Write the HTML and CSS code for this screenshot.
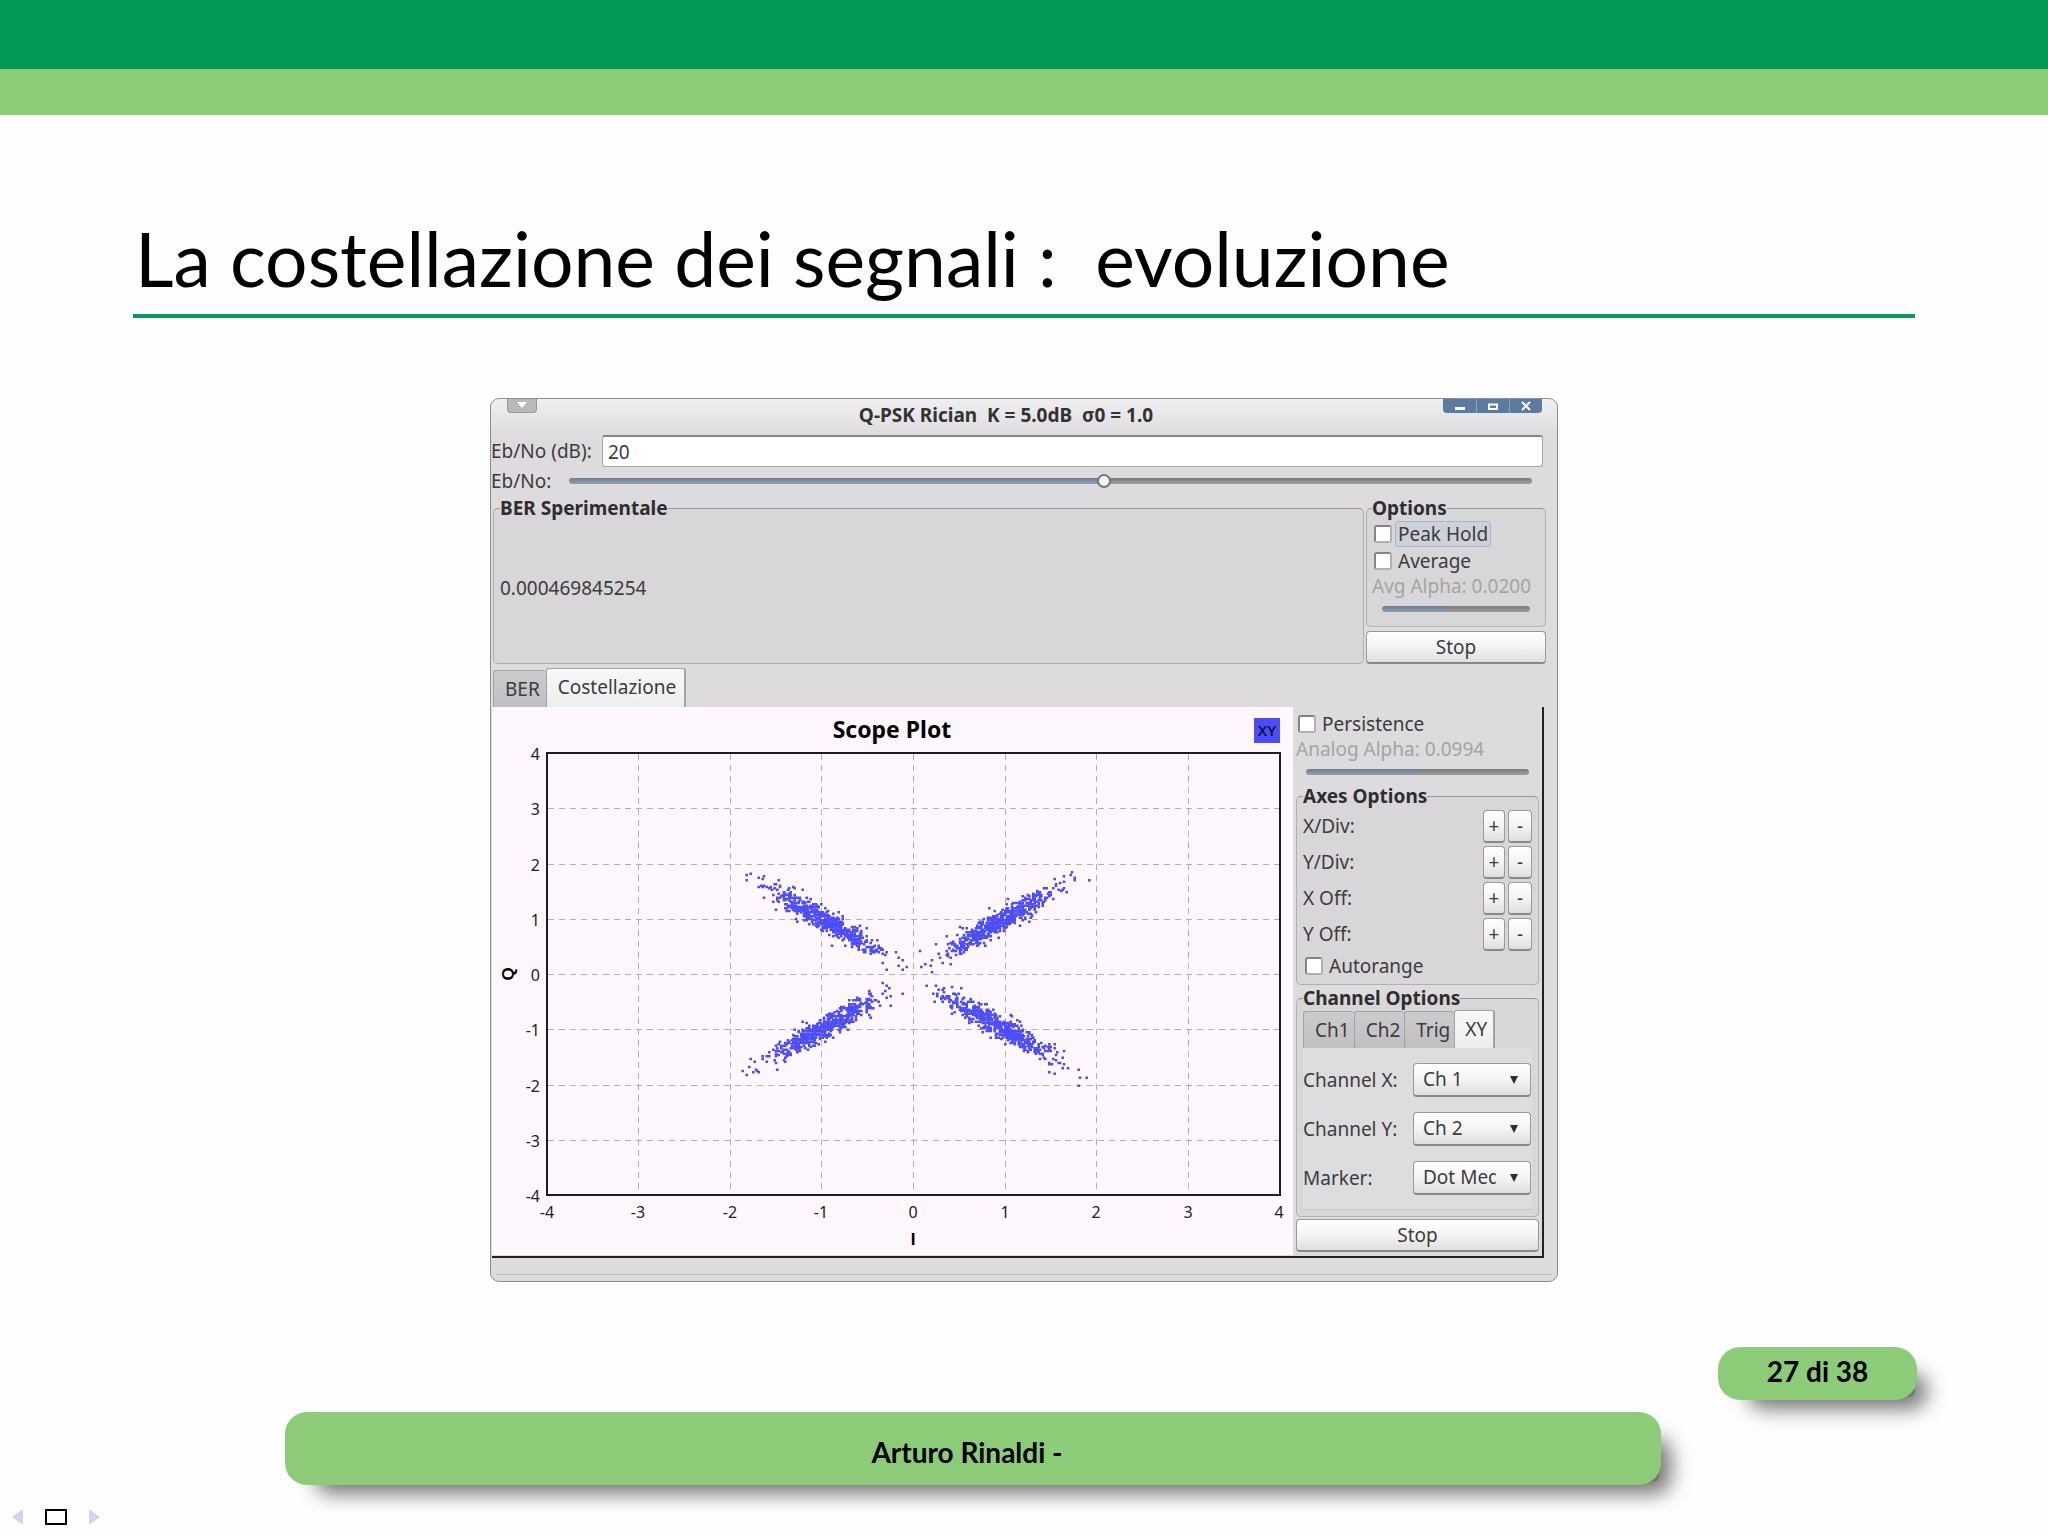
FILE: index.html
```html
<!DOCTYPE html>
<html lang="it">
<head>
<meta charset="utf-8">
<title>La costellazione dei segnali : evoluzione</title>
<link rel="stylesheet" href="styles.css">
</head>
<body>
<div class="slide">
  <header class="bands"><div class="band-dark"></div><div class="band-light"></div></header>
  <h1 class="title">La costellazione dei segnali :&nbsp; evoluzione</h1>

  <main class="window">
    <div class="titlebar">
      <button class="menu-button" type="button" aria-label="Menu"><svg width="10" height="7" viewBox="0 0 10 7"><path d="M0 0h10L5 6z" fill="#fff"/></svg></button>
      <h2 class="window-title">Q-PSK Rician&nbsp; K = 5.0dB&nbsp; σ0 = 1.0</h2>
      <div class="window-controls">
        <button type="button" aria-label="Minimize"><svg width="12" height="12" viewBox="0 0 12 12"><path d="M1 7h10v3H1z" fill="#fff"/></svg></button>
        <button type="button" aria-label="Maximize"><svg width="12" height="12" viewBox="0 0 12 12"><path d="M2 4.500h8v4.500H2z" fill="none" stroke="#fff" stroke-width="2"/></svg></button>
        <button type="button" aria-label="Close"><svg width="12" height="12" viewBox="0 0 12 12"><path d="M2 2l8 8M10 2l-8 8" stroke="#fff" stroke-width="2"/></svg></button>
      </div>
    </div>

    <div class="entry-row">
      <label for="ebno-db">Eb/No (dB):</label>
      <input id="ebno-db" class="entry" type="text" value="20">
    </div>
    <div class="slider-row">
      <label for="ebno">Eb/No:</label>
      <input id="ebno" class="slider" type="range" min="0" max="1000" value="556" style="--fill: 55.6%">
    </div>

    <div class="top-row">
      <fieldset class="group ber-group">
        <legend>BER Sperimentale</legend>
        <output class="ber-value">0.000469845254</output>
      </fieldset>
      <div class="side">
        <fieldset class="group options-group">
          <legend>Options</legend>
          <label class="check"><input type="checkbox"><span class="focused">Peak Hold</span></label>
          <label class="check"><input type="checkbox"><span>Average</span></label>
          <label class="muted" for="avg">Avg Alpha: 0.0200</label>
          <input id="avg" class="slider no-thumb" type="range" disabled value="44" style="--fill: 44%">
        </fieldset>
        <button class="button" type="button">Stop</button>
      </div>
    </div>

    <div class="tabs main-tabs" role="tablist">
      <button class="tab" type="button" role="tab">BER</button>
      <button class="tab active" type="button" role="tab" aria-selected="true">Costellazione</button>
    </div>

    <div class="page">
      <svg class="plot" viewBox="0 0 801 548" role="img" aria-label="Scope Plot">
        <g id="grid" class="grid"></g>
        <g id="points" class="points"></g>
        <path class="frame" d="M55 46H788V488H55z"/>
        <text class="plot-title" x="400" y="31">Scope Plot</text>
        <rect class="key" x="762" y="11" width="26" height="25"/>
        <text class="key-text" x="775" y="29">XY</text>
        <text class="axis" x="421" y="538">I</text>
        <text class="axis" transform="translate(22 267) rotate(-90)">Q</text>
        <g id="ticks" class="ticks"></g>
      </svg>

      <div class="panel">
        <label class="check"><input type="checkbox"><span>Persistence</span></label>
        <label class="muted" for="analog">Analog Alpha: 0.0994</label>
        <input id="analog" class="slider no-thumb" type="range" disabled value="50" style="--fill: 50%">

        <fieldset class="group axes-group">
          <legend>Axes Options</legend>
          <div class="step-row"><span>X/Div:</span><button class="button" type="button">+</button><button class="button" type="button">-</button></div>
          <div class="step-row"><span>Y/Div:</span><button class="button" type="button">+</button><button class="button" type="button">-</button></div>
          <div class="step-row"><span>X Off:</span><button class="button" type="button">+</button><button class="button" type="button">-</button></div>
          <div class="step-row"><span>Y Off:</span><button class="button" type="button">+</button><button class="button" type="button">-</button></div>
          <label class="check"><input type="checkbox"><span>Autorange</span></label>
        </fieldset>

        <fieldset class="group channel-group">
          <legend>Channel Options</legend>
          <div class="tabs" role="tablist">
            <button class="tab" type="button" role="tab">Ch1</button>
            <button class="tab" type="button" role="tab">Ch2</button>
            <button class="tab" type="button" role="tab">Trig</button>
            <button class="tab active" type="button" role="tab" aria-selected="true">XY</button>
          </div>
          <div class="channel-pane">
            <label for="chx">Channel X:</label>
            <div class="choice"><select id="chx"><option>Ch 1</option></select></div>
            <label for="chy">Channel Y:</label>
            <div class="choice"><select id="chy"><option>Ch 2</option></select></div>
            <label for="marker">Marker:</label>
            <div class="choice"><select id="marker"><option>Dot Medium</option></select></div>
          </div>
        </fieldset>
        <button class="button" type="button">Stop</button>
      </div>
    </div>
    <div class="status"></div>
  </main>

  <footer class="footer">
    <div class="pill page-number">27&nbsp;di&nbsp;38</div>
    <div class="pill author">Arturo Rinaldi -</div>
    <nav class="nav">
      <a href="#prev" aria-label="Precedente"><svg width="11" height="16" viewBox="0 0 11 16"><path d="M11 0v16L0 8z" fill="#d6d3ee"/></svg></a>
      <a href="#slide" aria-label="Diapositiva"><svg width="22" height="16" viewBox="0 0 22 16"><path d="M1 1h20v14H1z" fill="none" stroke="#000" stroke-width="2"/></svg></a>
      <a href="#next" aria-label="Successiva"><svg width="11" height="16" viewBox="0 0 11 16"><path d="M0 0v16l11-8z" fill="#d6d3ee"/></svg></a>
    </nav>
  </footer>
</div>
<script src="plot.js"></script>
</body>
</html>
```

FILE: styles.css
```css
* { box-sizing: border-box; }

body {
  margin: 0;
  background: #fefefe;
  color: #000;
}

button, input, select { font: inherit; color: inherit; margin: 0; }

.slide {
  display: flex;
  flex-direction: column;
  min-height: 100vh;
  isolation: isolate;
}

.band-dark { height: 69px; background: #009a57; }
.band-light { height: 46px; background: #8ccc78; }

.title {
  margin: 95px 133px 80px;
  padding: 0 0 8px 2px;
  border-bottom: 4px solid #079a5b;
  font: 400 75px/96px Lato, sans-serif;
}

/* Application window */
.window {
  width: 100%;
  max-width: 1068px;
  margin: 0 auto;
  border: 1px solid #8f8e92;
  border-radius: 9px;
  background: linear-gradient(#f0eff0, #dddbde 36px);
  color: #3c3c3c;
  font: 400 19px/24px "Noto Sans", sans-serif;
}

.titlebar {
  display: flex;
  align-items: flex-start;
  height: 36px;
  padding: 0 15px 0 16px;
}

.menu-button {
  display: flex;
  align-items: center;
  justify-content: center;
  width: 30px;
  height: 14px;
  padding: 0;
  border: 1px solid #98979a;
  border-top: 0;
  border-radius: 0 0 4px 4px;
  background: #b9b8bb;
}

.window-title {
  flex: 1;
  margin: 4px 0 0;
  padding-left: 32px;
  color: #333;
  font: 700 19px/24px "Noto Sans", sans-serif;
  text-align: center;
}

.window-controls {
  display: flex;
  height: 14px;
  border-radius: 0 0 4px 4px;
  background: #5b7ba3;
  overflow: hidden;
}

.window-controls button {
  display: flex;
  align-items: center;
  justify-content: center;
  width: 33px;
  padding: 0;
  border: 0;
  background: none;
}

.window-controls button + button { border-left: 1px solid #8ba3c0; }

.entry-row, .slider-row { display: flex; align-items: center; }
.entry-row { margin-bottom: 2px; padding-right: 14px; }
.entry-row label { width: 111px; }
.slider-row { margin-bottom: 3px; padding-right: 25px; }
.slider-row label { width: 78px; }

.entry {
  flex: 1;
  height: 32px;
  padding: 0 5px;
  border: 1px solid #a6a5a8;
  border-top: 2px solid #858488;
  border-radius: 3px;
  background: #fff;
}

.slider {
  appearance: none;
  display: block;
  flex: 1;
  height: 16px;
  background: none;
}

.slider::-webkit-slider-runnable-track {
  height: 6px;
  border-radius: 3px;
  background:
    linear-gradient(#0002, #fff2),
    linear-gradient(90deg, #8190a5 var(--fill), #8f8f91 var(--fill));
}

.slider::-webkit-slider-thumb {
  appearance: none;
  width: 14px;
  height: 14px;
  margin-top: -4px;
  border: 2px solid #77777a;
  border-radius: 7px;
  background: #f4f4f4;
}

.no-thumb::-webkit-slider-thumb { visibility: hidden; }

.top-row { display: flex; gap: 2px; padding: 0 11px 0 2px; }
.side { display: flex; flex-direction: column; width: 180px; }

.group {
  min-width: 0;
  margin: 0;
  padding: 0 6px;
  border: 1px solid #b0afb2;
  border-top-color: #98979a;
  border-radius: 5px;
  background: #d8d6d9;
}

.group legend {
  padding: 0;
  color: #2e2e2e;
  font: 700 19px/24px "Noto Sans", sans-serif;
}

.ber-group { flex: 1; }
.ber-value { display: block; margin-top: 56px; }

.options-group { padding: 0 5px 9px; }
.options-group .slider { width: 148px; margin: 3px 0 0 10px; }

.check {
  display: flex;
  align-items: center;
  gap: 3px;
  height: 27px;
  padding-left: 2px;
}

.check input {
  appearance: none;
  width: 18px;
  height: 18px;
  border: 2px solid #858488;
  border-right-color: #b0afb2;
  border-bottom-color: #b0afb2;
  border-radius: 3px;
  background: #fff;
}

.check span { padding: 0 2px; border: 1px solid transparent; border-radius: 3px; }
.check .focused { border-color: #aab4cf; background: #cfd1da; }

.muted { display: block; color: #a5a4a6; white-space: nowrap; }

.button {
  height: 33px;
  padding: 0;
  border: 1px solid #9a999c;
  border-bottom: 2px solid #88878a;
  border-radius: 4px;
  background: linear-gradient(#fff, #f4f4f4 50%, #dedee0);
}

.side > .button { margin-top: 4px; }

/* Tabs */
.tabs { display: flex; align-items: flex-end; }
.main-tabs { margin: 4px 2px 0; }

.tab {
  height: 37px;
  padding: 0 6px 0 11px;
  border: 1px solid #a3a2a5;
  border-bottom: 0;
  border-right: 0;
  border-radius: 3px 3px 0 0;
  background: linear-gradient(#cccbcd, #bfbec1);
}

.tab.active {
  height: 39px;
  padding: 0 8px 2px 11px;
  border-right: 2px solid #a3a2a5;
  background: linear-gradient(#f8f8f8, #eceeed);
}

.page {
  display: grid;
  grid-template-columns: 1fr 249px;
  margin-right: 13px;
  margin-left: 1px;
  border-right: 2px solid #222;
  border-bottom: 2px solid #222;
}

/* Scope plot */
.plot {
  display: block;
  width: 100%;
  height: auto;
  background: #fef8fe;
  font-family: "Noto Sans", sans-serif;
  text-anchor: middle;
}

.grid { stroke: #b9abb6; stroke-dasharray: 6 5; stroke-width: 1; shape-rendering: crispEdges; }
.points { fill: #4c4cfb; }
.frame { fill: none; stroke: #221c22; stroke-width: 2; }
.plot-title { font-size: 23px; font-weight: 700; }
.key { fill: #4c4cfb; }
.key-text { font-size: 15px; font-weight: 600; fill: #12124a; }
.axis { font-family: "Liberation Sans", sans-serif; font-size: 17px; font-weight: 700; }
.ticks { font-size: 16px; fill: #222; }
.ticks .left { text-anchor: end; }

/* Scope controls */
.panel { display: flex; flex-direction: column; padding: 4px 3px 4px 3px; }
.panel > .check { height: 25px; }
.panel > .muted { margin-top: 1px; }
.panel > .slider { flex: none; margin: 3px 10px 4px; }
.panel > .button { height: 33px; }

.axes-group legend { margin-bottom: 2px; }
.axes-group .check { height: 24px; margin-bottom: 6px; }
.step-row { display: flex; gap: 3px; margin-bottom: 3px; }
.step-row span { flex: 1; line-height: 32px; }
.step-row .button { width: 22px; font-size: 19px; line-height: 24px; }
.step-row .button:last-child { width: 24px; }

.channel-group { margin: 1px 0 2px; padding-bottom: 6px; }
.channel-group .tabs { height: 38px; }
.channel-group .tab { padding: 0 4px 0 11px; }
.channel-group .tab.active { height: 38px; padding: 0 6px 2px 10px; }

.channel-pane {
  display: grid;
  grid-template-columns: 1fr 118px;
  align-items: center;
  row-gap: 15px;
  padding: 15px 1px 14px 0;
  border-bottom: 1px solid #c4c3c6;
  background: #dddcde;
  white-space: nowrap;
}

.choice { position: relative; }

.choice::after {
  content: "";
  position: absolute;
  top: 13px;
  right: 13px;
  border: 4px solid transparent;
  border-top: 8px solid #2e2e2e;
  border-bottom: 0;
  pointer-events: none;
}

.choice select {
  appearance: none;
  display: block;
  width: 100%;
  height: 34px;
  padding: 0 34px 2px 9px;
  border: 1px solid #9a999c;
  border-bottom: 2px solid #88878a;
  border-radius: 4px;
  background: linear-gradient(#fff, #f4f4f4 50%, #dedee0);
  text-overflow: clip;
}

.status { height: 17px; margin: 0 5px 6px; border-bottom: 1px solid #c0bfc2; }

/* Footer */
.footer { display: flex; flex-direction: column; margin-top: 65px; }

.pill {
  position: relative;
  border-radius: 22px;
  background: #8ccc78;
  font: 700 28px/36px Lato, sans-serif;
  text-align: center;
}

.pill::before {
  content: "";
  position: absolute;
  z-index: -1;
  inset: 38px 2px 3px 42px;
  border-radius: 6px;
  background: #767676;
  box-shadow: 0 0 20px 12px #767676;
}

.page-number { align-self: flex-end; width: 199px; margin-right: 131px; padding: 6px 0 11px; }
.author { margin: 12px 387px 0 285px; padding: 22px 12px 15px 0; }
.nav { display: flex; gap: 22px; padding: 24px 12px 12px; }
.nav a, .nav svg { display: block; }
```

FILE: plot.js
```js
const SVG = "http://www.w3.org/2000/svg";
const X0 = 421, Y0 = 267, SX = 91.6, SY = 55.25;

function add(parent, name, attrs, text) {
  const el = document.createElementNS(SVG, name);
  for (const key in attrs) el.setAttribute(key, attrs[key]);
  if (text !== undefined) el.textContent = text;
  document.getElementById(parent).appendChild(el);
}

for (let v = -4; v <= 4; v++) {
  const x = Math.round(X0 + v * SX);
  const y = Math.round(Y0 - v * SY);
  if (Math.abs(v) < 4) {
    add("grid", "path", { d: `M${x} 47V487M56 ${y}H787` });
  }
  add("ticks", "text", { x, y: 511 }, v);
  add("ticks", "text", { x: 48, y: y + 7, class: "left" }, v);
}

// Seeded generator, so that the noise is the same on each load.
let seed = 20;
function random() {
  seed = (seed * 1664525 + 1013904223) % 4294967296;
  return (seed + 1) / 4294967297;
}
function gauss() {
  return Math.sqrt(-2 * Math.log(random())) * Math.cos(2 * Math.PI * random());
}

const cell = 4 / 3;
let d = "";
function dot(x, y) {
  const px = Math.round(x / cell) * cell;
  const py = Math.round(y / cell) * cell;
  d += `M${(px - 1.3).toFixed(1)} ${(py - 1.3).toFixed(1)}h2.6v2.6h-2.6z`;
}

for (const [si, sq] of [[1, 1], [-1, 1], [-1, -1], [1, -1]]) {
  for (let n = 0; n < 560; n++) {
    let r = 0.95 + 0.29 * gauss();
    while (r < 0.36 || r > 1.6) r = 0.95 + 0.29 * gauss();
    dot(X0 + si * SX * (r + 0.075 * gauss()), Y0 - sq * SY * (r + 0.075 * gauss()));
  }
}

// Sparse samples at the centre and at the tips, in plot pixels.
const sparse = [
  [255,168],[258,167],[255,173],[267,171],[270,172],[272,169],[266,180],[269,178],[272,178],[277,181],
  [394,245],[391,256],[395,262],[404,245],[406,251],[410,253],[406,258],[410,263],[415,260],[384,243],[389,242],
  [251,364],[255,368],[258,352],[257,360],[262,355],[261,365],[265,364],[267,365],[270,349],[264,363],
  [391,276],[394,279],[397,281],[398,289],[410,287],[393,284],
  [428,244],[429,260],[433,257],[438,259],[440,253],[440,265],[446,246],[448,251],[450,256],[459,257],
  [434,279],[444,279],[441,286],[445,289],[446,283],[443,294],[451,283],[451,295],[460,280],[469,281],
  [580,165],[579,168],[583,170],[583,173],[597,173],[563,172],[564,177],[568,176],[572,174],[571,182],
  [587,363],[588,370],[594,370],[586,378],[572,357],[570,361],[576,361],[562,337],[564,353],[557,365],[562,366],[571,350]
];
for (const [x, y] of sparse) dot(x, y);
add("points", "path", { d });
```
